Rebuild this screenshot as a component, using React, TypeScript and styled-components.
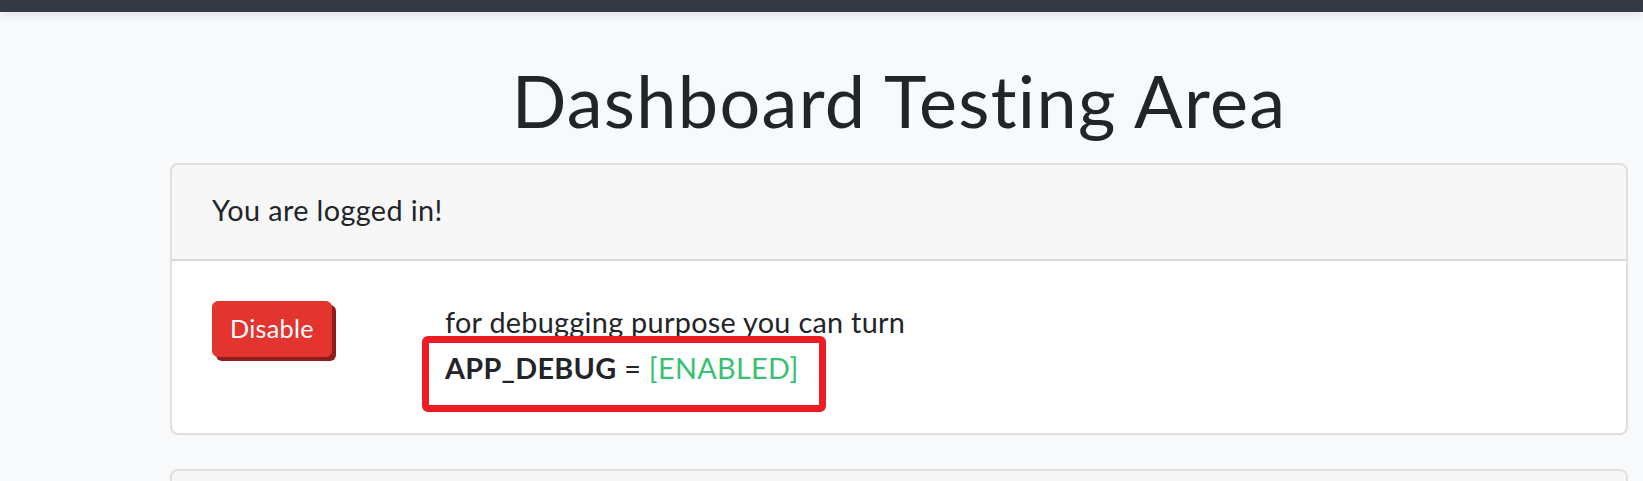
import React from "react";
import styled, { createGlobalStyle } from "styled-components";

const GlobalStyle = createGlobalStyle`
  html, body {
    margin: 0;
    padding: 0;
    background: #f8f9fb;
    color: #212529;
    font-family: Lato, "Open Sans", sans-serif;
  }
  * { box-sizing: border-box; }
`;

const Navbar = styled.nav`
  height: 12px;
  background: #343a42;
  box-shadow: 0 4px 8px rgba(0, 0, 0, 0.075);
  position: relative;
  z-index: 1;
`;

const Main = styled.main`
  padding: 0 15px 0 170px;
`;

const Title = styled.h1`
  margin: 45px 0 20px;
  font-size: 72px;
  font-weight: 400;
  line-height: 1.2;
  letter-spacing: 1.3px;
  text-align: center;
  color: #212529;
`;

const Card = styled.section<{ $spaced?: boolean }>`
  background: #fff;
  border: 2px solid rgba(0, 0, 0, 0.125);
  border-radius: 8px;
  margin-top: ${(p) => (p.$spaced ? "34px" : "0")};
  overflow: hidden;
`;

const CardHeader = styled.div`
  padding: 22px 40px 26px;
  background: rgba(0, 0, 0, 0.03);
  border-bottom: 2px solid rgba(0, 0, 0, 0.125);
  font-size: 28.8px;
  line-height: 1.6;
  letter-spacing: 0.4px;
  min-height: 94px;
`;

const CardBody = styled.div`
  padding: 40px;
  display: grid;
  grid-template-columns: 233px 1fr;
  align-items: start;
`;

const DangerButton = styled.button`
  justify-self: start;
  font-family: inherit;
  font-size: 25.2px;
  line-height: 1.5;
  letter-spacing: 0.3px;
  padding: 8px 17px;
  color: #fff;
  background: #e3342f;
  border: 1px solid #e3342f;
  border-radius: 6px;
  box-shadow: 4px 4px 0 0 #8f1d1a;
  cursor: pointer;
`;

const Info = styled.p`
  position: relative;
  margin: -2px 0 2px;
  font-size: 28.8px;
  line-height: 46px;
  letter-spacing: 0.3px;
`;

const Key = styled.b`
  font-weight: 700;
`;

const Enabled = styled.span`
  color: #38c172;
`;

const Annotation = styled.span`
  position: absolute;
  left: -23px;
  top: 37px;
  width: 404px;
  height: 76px;
  border: 7px solid #ec1c24;
  border-radius: 6px;
  pointer-events: none;
`;

export default function App() {
  return (
    <>
      <GlobalStyle />
      <Navbar />
      <Main>
        <Title>Dashboard Testing Area</Title>
        <Card>
          <CardHeader>You are logged in!</CardHeader>
          <CardBody>
            <DangerButton type="button">Disable</DangerButton>
            <Info>
              for debugging purpose you can turn
              <br />
              <Key>APP_DEBUG</Key> = <Enabled>[ENABLED]</Enabled>
              <Annotation />
            </Info>
          </CardBody>
        </Card>
        <Card $spaced>
          <CardHeader />
        </Card>
      </Main>
    </>
  );
}
